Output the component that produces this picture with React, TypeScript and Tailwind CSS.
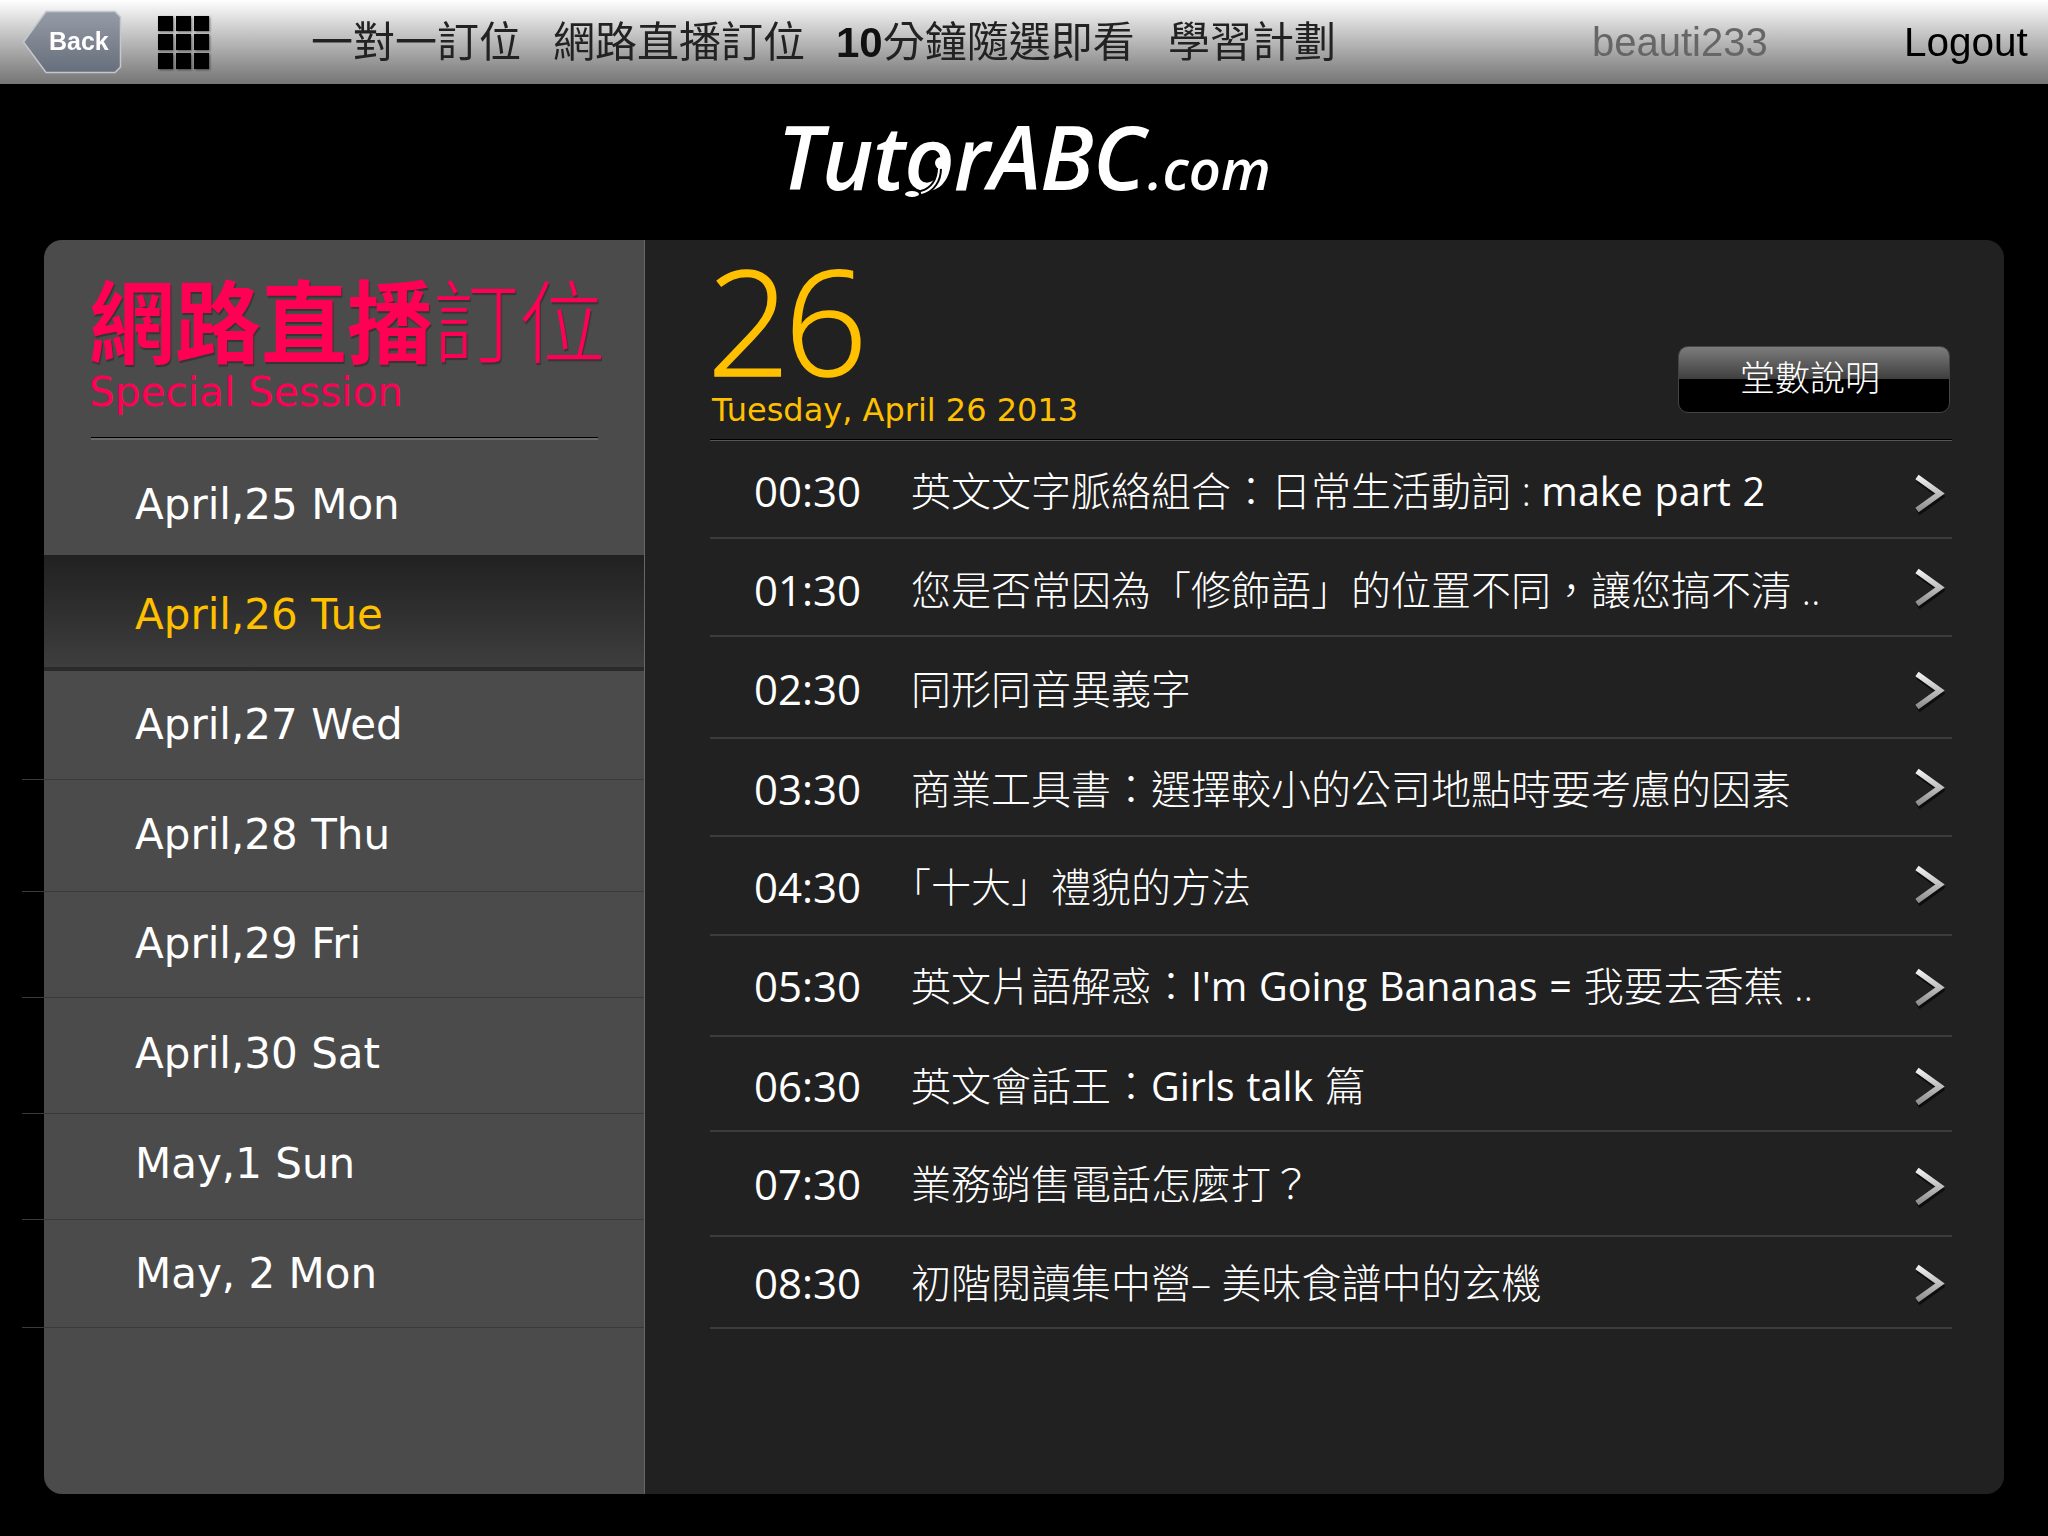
import React from "react";

const CJK = "font-['Open_Sans','Noto_Sans_CJK_TC',sans-serif]";
const DEJA = "font-['DejaVu_Sans','Noto_Sans_CJK_TC',sans-serif]";
const ARIAL = "font-['Liberation_Sans','Noto_Sans_CJK_TC',sans-serif]";

const DAYS = [
  { label: "April,25 Mon", row: "h-[115px] pt-[41px]" },
  { label: "April,26 Tue", row: "h-[116px] pt-[36px]", active: true },
  { label: "April,27 Wed", row: "h-[109px] pt-[30px] border-b border-[#3a3a3a]" },
  { label: "April,28 Thu", row: "h-[112px] pt-[31px] border-b border-[#3a3a3a]" },
  { label: "April,29 Fri", row: "h-[106px] pt-[28px] border-b border-[#3a3a3a]" },
  { label: "April,30 Sat", row: "h-[116px] pt-[32px] border-b border-[#3a3a3a]" },
  { label: "May,1 Sun", row: "h-[106px] pt-[26px] border-b border-[#3a3a3a]" },
  { label: "May, 2 Mon", row: "h-[108px] pt-[30px] border-b border-[#3a3a3a]" },
];

const CLASSES = [
  { time: "00:30", title: "英文文字脈絡組合：日常生活動詞 : make part 2", row: "h-[98px] pt-[26px]", arrow: "mt-[6px]" },
  { time: "01:30", title: "您是否常因為「修飾語」的位置不同，讓您搞不清 ..", row: "h-[98px] pt-[27px]", arrow: "mt-[1px]" },
  { time: "02:30", title: "同形同音異義字", row: "h-[102px] pt-[28px]", arrow: "mt-[5px]" },
  { time: "03:30", title: "商業工具書：選擇較小的公司地點時要考慮的因素", row: "h-[98px] pt-[26px]", arrow: "mt-[2px]" },
  { time: "04:30", title: "「十大」禮貌的方法", row: "h-[99px] pt-[26px]", arrow: "mt-[1px]", shift: "-ml-[20px]" },
  { time: "05:30", title: "英文片語解惑：I'm Going Bananas = 我要去香蕉 ..", row: "h-[101px] pt-[26px]", arrow: "mt-[5px]" },
  { time: "06:30", title: "英文會話王：Girls talk 篇", row: "h-[95px] pt-[25px]", arrow: "mt-[4px]" },
  { time: "07:30", title: "業務銷售電話怎麼打？", row: "h-[105px] pt-[28px]", arrow: "mt-[6px]" },
  { time: "08:30", title: "初階閱讀集中營– 美味食譜中的玄機", row: "h-[92px] pt-[22px]", arrow: "mt-[4px]" },
];

// latin runs sit heavier than the cjk ones in the reference
const Title = ({ text }: { text: string }) => (
  <>
    {text.split(/([A-Za-z0-9'=][A-Za-z0-9'= ]*)/).map((part, i) =>
      i % 2 ? (
        <span key={i} className="font-normal text-[39.5px] [word-spacing:1.5px]">
          {part}
        </span>
      ) : (
        <span key={i}>{part}</span>
      ),
    )}
  </>
);

const Chevron = ({ className }: { className: string }) => (
  <svg width="32" height="46" viewBox="0 0 32 46" className={`${className} shrink-0`}>
    <defs>
      <linearGradient id="chev" gradientUnits="userSpaceOnUse" x1="0" y1="2" x2="0" y2="40">
        <stop offset="0" stopColor="#f5f5f5" />
        <stop offset="1" stopColor="#858585" />
      </linearGradient>
    </defs>
    <path d="M4 4 L27 20.5 L4 37" fill="none" stroke="#000" strokeOpacity="0.6" strokeWidth="5.5" transform="translate(1 3)" />
    <path d="M4 4 L27 20.5 L4 37" fill="none" stroke="url(#chev)" strokeWidth="5.5" />
  </svg>
);

const BackButton = () => (
  <div className="relative w-[100px] h-[64px] ml-[22px] shrink-0">
    <svg width="100" height="64" viewBox="0 0 100 64" className="absolute inset-0">
      <defs>
        <linearGradient id="back" x1="0" y1="0" x2="0" y2="1">
          <stop offset="0" stopColor="#969ca7" />
          <stop offset="1" stopColor="#666e7b" />
        </linearGradient>
      </defs>
      <path d="M24 1.5 H93 L98.5 7 V57 L93 62.5 H24 L1.5 32 Z" fill="url(#back)" stroke="#c4c8cd" strokeWidth="1.5" />
    </svg>
    <span className={`${ARIAL} absolute left-[27px] top-[18px] text-[25px] leading-[26px] font-bold text-white blur-[0.5px]`}>
      Back
    </span>
  </div>
);

const Logo = () => (
  <div className="relative flex items-baseline font-['Open_Sans',sans-serif] italic text-white">
    <span className="text-[88px] leading-[100px] font-semibold tracking-[-1px]">TutorABC</span>
    <span className="text-[56px] leading-[100px] font-semibold ml-[3px]">.com</span>
    {/* headset over the o */}
    <svg width="50" height="50" viewBox="0 0 50 50" className="absolute left-[122px] top-[44px]">
      <path d="M40 18 C40 30 34 40 22 43" fill="none" stroke="#000" strokeWidth="6" />
      <path d="M40 18 C40 30 34 40 22 43" fill="none" stroke="#fff" strokeWidth="2" />
      <ellipse cx="13" cy="44" rx="7" ry="3" fill="#fff" />
      <circle cx="42" cy="13" r="6" fill="#fff" />
    </svg>
  </div>
);

export default function App() {
  return (
    <div className="w-[2048px] h-[1536px] bg-black overflow-hidden flex flex-col">
      <header className="h-[84px] shrink-0 flex items-center bg-gradient-to-b from-white to-[#757575]">
        <BackButton />
        <div className="ml-[36px] w-[51px] h-[53px] grid grid-cols-3 gap-[3px] shrink-0 blur-[0.5px] drop-shadow-[1px_1px_1px_rgba(0,0,0,0.5)]">
          {Array.from({ length: 9 }).map((_, i) => (
            <div key={i} className="bg-black" />
          ))}
        </div>
        <nav className={`${ARIAL} ml-[102px] pt-[2px] flex items-center text-[42px] leading-[50px] text-[#222] whitespace-nowrap blur-[0.5px] w-[1281px]`}>
          <span className="w-[242px]">一對一訂位</span>
          <span className="w-[283px]">網路直播訂位</span>
          <span className="w-[332px]">
            <b className="text-[#111]">10</b>分鐘隨選即看
          </span>
          <span>學習計劃</span>
        </nav>
        <span className={`${ARIAL} text-[40px] leading-[50px] text-[#666] blur-[0.5px] w-[312px]`}>beauti233</span>
        <span className={`${ARIAL} text-[40.5px] leading-[50px] text-black blur-[0.4px]`}>Logout</span>
      </header>

      <div className="h-[156px] shrink-0 flex justify-center items-start pt-[22px]">
        <Logo />
      </div>

      <main className="mx-[44px] h-[1254px] flex">
        <aside className="w-[600px] shrink-0 bg-[#4b4b4b] rounded-l-[18px] flex flex-col">
          <div className="h-[198px] shrink-0 pl-[45px] pt-[37px]">
            <h1 className={`${ARIAL} text-[86px] leading-[90px] text-[#ff0055] whitespace-nowrap origin-top scale-y-[1.05] [text-shadow:1px_2px_1px_rgba(0,0,0,0.3)]`}>
              <b>網路直播</b>
              <span className="font-light">訂位</span>
            </h1>
            <p className={`${DEJA} text-[40.6px] leading-[40px] mt-[5px] text-[#ff0055]`}>Special Session</p>
          </div>
          <div className="mx-[47px] w-[507px] h-[3px] shrink-0 border-t border-black border-b-2 border-b-[#6a6a6a] -mt-[1px]" />
          {DAYS.map((d) => (
            <div
              key={d.label}
              className={`${d.row} ${DEJA} shrink-0 text-[42px] leading-[48px] whitespace-nowrap ${
                d.active
                  ? "pl-[91px] bg-gradient-to-b from-[#212121] to-[#3e3e3e] text-[#ffc000] border-b-4 border-b-[#2b2b2b]"
                  : "-ml-[22px] pl-[113px] text-white"
              }`}
            >
              {d.label}
            </div>
          ))}
        </aside>
        <div className="w-[1px] shrink-0 bg-[#666]" />
        <section className="flex-1 bg-[#212121] rounded-r-[18px] pl-[65px] pr-[52px] flex flex-col">
          <div className="h-[199px] shrink-0 relative flex justify-between">
            <div>
              <div className="font-['Open_Sans',sans-serif] font-light text-[146px] leading-[120px] mt-[20px] -ml-[3px] tracking-[-6px] text-[#ffc000] [-webkit-text-stroke:1.5px_#ffc000]">26</div>
              <div className={`${DEJA} text-[32px] leading-[40px] mt-[10px] ml-[2px] text-[#ffc000] whitespace-nowrap`}>
                Tuesday, April 26 2013
              </div>
            </div>
            <button className={`${ARIAL} mt-[106px] mr-[2px] w-[272px] h-[67px] pr-[8px] rounded-[10px] border border-[#444] font-light text-white text-[35px] bg-[linear-gradient(#7c7c7c,#3f3f3f_49%,#000_49%,#000)]`}>
              堂數說明
            </button>
          </div>
          <div className="h-[2px] shrink-0 border-t border-black bg-[#555]" />
          {CLASSES.map((c) => (
            <div
              key={c.time}
              className={`${c.row} ${CJK} shrink-0 flex items-start text-white font-light text-[40px] leading-[48px] border-b-2 border-b-[#3c3c3c] whitespace-nowrap`}
            >
              <span className="w-[201px] pl-[44px] text-[42px] font-normal shrink-0">{c.time}</span>
              <span className={`flex-1 ${c.shift ?? ""}`}>
                <Title text={c.title} />
              </span>
              <Chevron className={c.arrow} />
              <span className="w-[7px]" />
            </div>
          ))}
        </section>
      </main>
    </div>
  );
}
